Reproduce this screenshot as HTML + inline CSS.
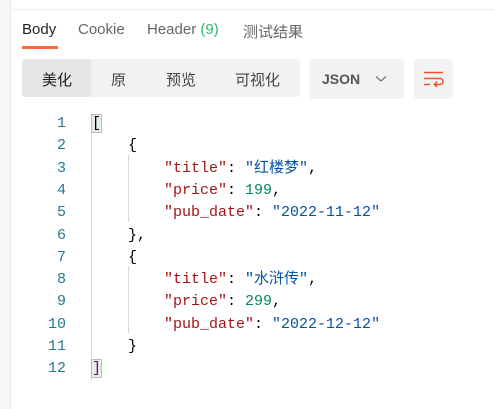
<!DOCTYPE html>
<html><head><meta charset="utf-8"><style>
*{margin:0;padding:0;box-sizing:border-box}
body{width:495px;height:409px;background:#fff;position:relative;overflow:hidden;font-family:"Liberation Sans","Noto Sans CJK SC",sans-serif}
.strip{position:absolute;left:0;top:0;width:11px;height:409px;background:#f6f6f6;border-right:1px solid #e8e8e8}
.top{position:absolute;left:12px;top:9px;right:0;height:1px;background:#ebebeb}
.tab{position:absolute;top:21px;font-size:15px;color:#666}
.ul{position:absolute;left:22px;top:46px;width:36px;height:3px;background:#ff6a3d}
.grp{position:absolute;left:22px;top:59px;width:278px;height:38px;background:#f2f2f2;border-radius:4px;overflow:hidden}
.act{position:absolute;left:0;top:0;width:69px;height:38px;background:#e6e6e6}
.bt{position:absolute;top:10px;font-size:15px;color:#444}
.json{position:absolute;left:309px;top:59px;width:95px;height:40px;background:#f2f2f2;border-radius:4px}
.wrap{position:absolute;left:414px;top:59px;width:39px;height:40px;background:#f2f2f2;border-radius:4px}
.code{position:absolute;left:0;top:113px;width:495px;font-family:"Liberation Mono","Noto Sans CJK SC",monospace;font-size:15px;line-height:22.3px}
.ln{position:absolute;left:0;width:66px;text-align:right;color:#237893}
.line{position:absolute;left:92px;white-space:pre;color:#000}
.k{color:#a31515}.s{color:#0451a5}.n{color:#098658}
.g{position:absolute;width:1px;background:#d8d8d8}
.br{background:#e6efe6;outline:1px solid #bbb}
</style></head><body>
<div class="strip"></div><div class="top"></div>
<div class="tab" style="left:22px;color:#222">Body</div>
<div class="tab" style="left:78px">Cookie</div>
<div class="tab" style="left:147px">Header <span style="color:#2db56d">(9)</span></div>
<div class="tab" style="left:243px">测试结果</div>
<div class="ul"></div>
<div class="grp"><div class="act"></div>
<div class="bt" style="left:20px;color:#222">美化</div>
<div class="bt" style="left:89px">原</div>
<div class="bt" style="left:144px">预览</div>
<div class="bt" style="left:213px">可视化</div></div>
<div class="json"><span style="position:absolute;left:13px;top:12px;font-size:14px;font-weight:bold;color:#555">JSON</span>
<svg style="position:absolute;left:66px;top:16px" width="12" height="8"><path d="M1 1.5 L6 6 L11 1.5" stroke="#777" stroke-width="1.3" fill="none"/></svg></div>
<div class="wrap"><svg style="position:absolute;left:9px;top:12px" width="22" height="16"><path d="M1 1.5H20M1 7.5H17a3 3 0 0 1 0 6H12M14 10.5L11.5 13.5L14 16M1 13.5H7" stroke="#e8542f" stroke-width="1.5" fill="none"/></svg></div>
<div class="g" style="left:91px;top:116px;height:265px"></div>
<div class="g" style="left:128px;top:155px;height:67px"></div>
<div class="g" style="left:128px;top:266px;height:67px"></div>
<div class="code">
<div class="ln" style="top:0">1</div><div class="ln" style="top:22.3px">2</div><div class="ln" style="top:44.6px">3</div><div class="ln" style="top:66.9px">4</div><div class="ln" style="top:89.2px">5</div><div class="ln" style="top:111.5px">6</div><div class="ln" style="top:133.8px">7</div><div class="ln" style="top:156.1px">8</div><div class="ln" style="top:178.4px">9</div><div class="ln" style="top:200.7px">10</div><div class="ln" style="top:223px">11</div><div class="ln" style="top:245.3px">12</div>
<div class="line" style="top:0"><span class="br">[</span></div>
<div class="line" style="top:22.3px">    {</div>
<div class="line" style="top:44.6px">        <span class="k">"title"</span>: <span class="s">"红楼梦"</span>,</div>
<div class="line" style="top:66.9px">        <span class="k">"price"</span>: <span class="n">199</span>,</div>
<div class="line" style="top:89.2px">        <span class="k">"pub_date"</span>: <span class="s">"2022-11-12"</span></div>
<div class="line" style="top:111.5px">    },</div>
<div class="line" style="top:133.8px">    {</div>
<div class="line" style="top:156.1px">        <span class="k">"title"</span>: <span class="s">"水浒传"</span>,</div>
<div class="line" style="top:178.4px">        <span class="k">"price"</span>: <span class="n">299</span>,</div>
<div class="line" style="top:200.7px">        <span class="k">"pub_date"</span>: <span class="s">"2022-12-12"</span></div>
<div class="line" style="top:223px">    }</div>
<div class="line" style="top:245.3px"><span class="br" style="color:#800080">]</span></div>
</div>
</body></html>
